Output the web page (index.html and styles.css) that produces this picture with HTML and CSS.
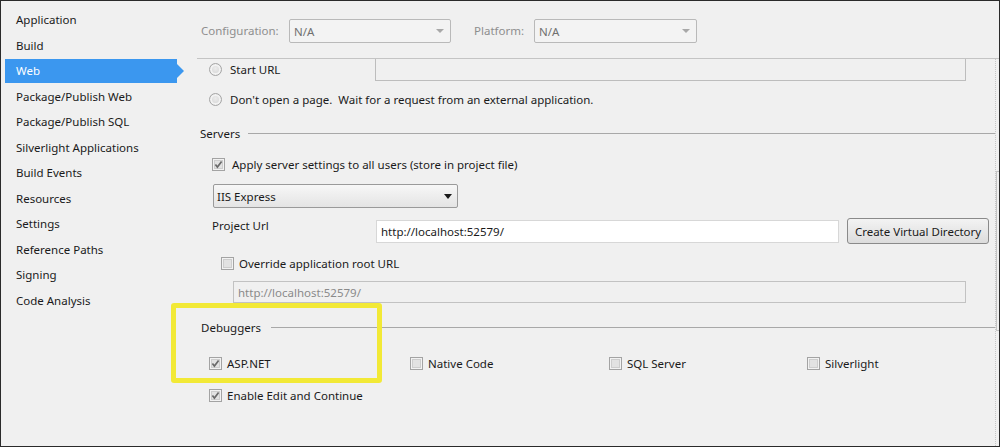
FILE: index.html
```html
<!DOCTYPE html>
<html>
<head>
<meta charset="utf-8">
<link rel="stylesheet" href="styles.css">
</head>
<body>
<div class="window">
  <nav class="nav">
    <div class="nav-item">Application</div>
    <div class="nav-item">Build</div>
    <div class="nav-item active">Web</div>
    <div class="nav-item">Package/Publish Web</div>
    <div class="nav-item">Package/Publish SQL</div>
    <div class="nav-item">Silverlight Applications</div>
    <div class="nav-item">Build Events</div>
    <div class="nav-item">Resources</div>
    <div class="nav-item">Settings</div>
    <div class="nav-item">Reference Paths</div>
    <div class="nav-item">Signing</div>
    <div class="nav-item">Code Analysis</div>
  </nav>
  <main class="main">
    <header class="toolbar">
      <span class="tlabel cfg">Configuration:</span>
      <div class="combo disabled cfg-combo"><span>N/A</span><span class="arrow light"></span></div>
      <span class="tlabel plat">Platform:</span>
      <div class="combo disabled plat-combo"><span>N/A</span><span class="arrow light"></span></div>
    </header>
    <div class="viewport">
      <div class="content">
        <div class="row start-row">
          <label class="opt radio-label"><span class="radio"></span>Start URL</label>
          <div class="textbox start-box"></div>
        </div>
        <div class="row radio-row">
          <label class="opt"><span class="radio"></span>Don't open a page.&nbsp; Wait for a request from an external application.</label>
        </div>

        <div class="group servers"><span>Servers</span><span class="rule"></span></div>
        <label class="opt apply"><svg class="cb" viewBox="0 0 13 13"><rect x="0.5" y="0.5" width="12" height="12" fill="#f2f2f2" stroke="#a3a3a3"/><rect x="2.5" y="2.5" width="8" height="8" fill="#e2e2e2" stroke="#cdcdcd"/><path d="M3.4 6.4 L5.4 9 L9.6 3.4" stroke="#6a6a6a" stroke-width="1.7" fill="none"/></svg>Apply server settings to all users (store in project file)</label>
        <div class="combo iis"><span>IIS Express</span><span class="arrow"></span></div>

        <div class="row url-row">
          <span class="url-label">Project Url</span>
          <div class="textbox url-box">http://localhost:52579/</div>
          <button class="btn">Create Virtual Directory</button>
        </div>
        <label class="opt override"><svg class="cb" viewBox="0 0 13 13"><rect x="0.5" y="0.5" width="12" height="12" fill="#f2f2f2" stroke="#a3a3a3"/><rect x="2.5" y="2.5" width="8" height="8" fill="#e2e2e2" stroke="#cdcdcd"/></svg>Override application root URL</label>
        <div class="textbox root-box">http://localhost:52579/</div>

        <div class="group debuggers"><span>Debuggers</span><span class="rule"></span></div>
        <div class="dbg-grid">
          <label class="opt"><svg class="cb" viewBox="0 0 13 13"><rect x="0.5" y="0.5" width="12" height="12" fill="#f2f2f2" stroke="#a3a3a3"/><rect x="2.5" y="2.5" width="8" height="8" fill="#e2e2e2" stroke="#cdcdcd"/><path d="M3.4 6.4 L5.4 9 L9.6 3.4" stroke="#6a6a6a" stroke-width="1.7" fill="none"/></svg>ASP.NET</label>
          <label class="opt"><svg class="cb" viewBox="0 0 13 13"><rect x="0.5" y="0.5" width="12" height="12" fill="#f2f2f2" stroke="#a3a3a3"/><rect x="2.5" y="2.5" width="8" height="8" fill="#e2e2e2" stroke="#cdcdcd"/></svg>Native Code</label>
          <label class="opt"><svg class="cb" viewBox="0 0 13 13"><rect x="0.5" y="0.5" width="12" height="12" fill="#f2f2f2" stroke="#a3a3a3"/><rect x="2.5" y="2.5" width="8" height="8" fill="#e2e2e2" stroke="#cdcdcd"/></svg>SQL Server</label>
          <label class="opt"><svg class="cb" viewBox="0 0 13 13"><rect x="0.5" y="0.5" width="12" height="12" fill="#f2f2f2" stroke="#a3a3a3"/><rect x="2.5" y="2.5" width="8" height="8" fill="#e2e2e2" stroke="#cdcdcd"/></svg>Silverlight</label>
        </div>
        <label class="opt enable"><svg class="cb" viewBox="0 0 13 13"><rect x="0.5" y="0.5" width="12" height="12" fill="#f2f2f2" stroke="#a3a3a3"/><rect x="2.5" y="2.5" width="8" height="8" fill="#e2e2e2" stroke="#cdcdcd"/><path d="M3.4 6.4 L5.4 9 L9.6 3.4" stroke="#6a6a6a" stroke-width="1.7" fill="none"/></svg>Enable Edit and Continue</label>
      </div>
      <div class="vscroll"><div class="thumb"></div></div>
    </div>
  </main>
  <div class="highlight"></div>
</div>
</body>
</html>
```

FILE: styles.css
```css
* { box-sizing: border-box; }
html, body { margin: 0; padding: 0; background: #f0f0f0; }
body {
  font-family: "Noto Sans", "Open Sans", sans-serif;
  font-size: 11.5px;
  color: #1a1a1a;
}
.window {
  position: relative;
  width: 1000px;
  height: 447px;
  border: 1px solid #2a2a2a;
  background: #f0f0f0;
  display: flex;
  overflow: hidden;
}
.nav {
  width: 196px;
  flex: none;
  padding: 6px 0 0 4px;
}
.nav-item {
  position: relative;
  height: 25.5px;
  line-height: 25.5px;
  width: 172px;
  padding-left: 11px;
  white-space: nowrap;
}
.nav-item.active {
  background: #3b97ef;
  color: #fff;
  height: 24px;
  line-height: 24px;
  margin: 1.25px 0 0.25px;
}
.nav-item.active::after {
  content: "";
  position: absolute;
  right: -7px;
  top: 5px;
  border-left: 7px solid #3b97ef;
  border-top: 7px solid transparent;
  border-bottom: 7px solid transparent;
}
.main {
  flex: 1;
  display: flex;
  flex-direction: column;
  min-width: 0;
}
.toolbar {
  height: 58px;
  flex: none;
  border-bottom: 1px solid #c4c4c4;
  display: flex;
  align-items: flex-start;
  padding: 18px 0 0 4px;
}
.tlabel { color: #8e8e8e; line-height: 24px; }
.cfg { width: 88px; }
.plat { width: 60px; margin-left: 23px; }
.combo {
  height: 24px;
  border: 1px solid #9a9a9a;
  border-radius: 2px;
  display: flex;
  align-items: center;
  justify-content: space-between;
  padding: 0 6px 0 4px;
  background: linear-gradient(#f7f7f7, #e4e4e4);
}
.combo.disabled {
  border-color: #b9b9b9;
  background: #f3f3f3;
  color: #707070;
}
.cfg-combo { width: 162px; }
.plat-combo { width: 163px; }
.arrow {
  width: 0; height: 0;
  border-left: 4px solid transparent;
  border-right: 4px solid transparent;
  border-top: 5px solid #1a1a1a;
}
.arrow.light { border-top-color: #a8a8a8; border-top-width: 4px; }
.viewport {
  flex: 1;
  display: flex;
  overflow: hidden;
}
.content {
  flex: 1;
  padding-left: 3px;
  min-width: 0;
}
.vscroll {
  width: 4px;
  flex: none;
  border-left: 1px dotted #c6c6c6;
  padding-top: 112px;
}
.thumb {
  height: 160px;
  border: 1px solid #c4c4c4;
  border-right: none;
}
.row { display: flex; }
.opt {
  display: flex;
  align-items: center;
  white-space: nowrap;
  height: 16px;
}
.radio {
  width: 13px; height: 13px;
  border-radius: 50%;
  border: 1px solid #a5a5a5;
  background: radial-gradient(circle at 50% 40%, #ececec 0, #d6d6d6 70%);
  box-shadow: inset 0 0 0 2px #f2f2f2;
  margin-right: 8px;
  flex: none;
}
.cb { width: 13px; height: 13px; flex: none; margin-right: 6px; }
.start-row { margin-top: -2px; height: 24px; align-items: center; }
.radio-label { width: 175px; padding-left: 9px; }
.textbox {
  height: 23px;
  border: 1px solid #c9c9c9;
  background: #fff;
  padding-left: 4px;
  display: flex;
  align-items: center;
}
.start-box {
  flex: 1;
  margin-right: 29px;
  background: #f0f0f0;
  border-color: #bdbdbd;
  border-top: none;
}
.radio-row { margin-top: 6px; height: 24px; align-items: center; padding-left: 9px; }
.group {
  display: flex;
  align-items: center;
  height: 16px;
}
.group .rule { flex: 1; border-top: 1px solid #a8a8a8; }
.servers { margin-top: 14px; }
.servers span:first-child { margin-right: 8px; }
.debuggers { margin-top: 16px; padding-left: 1px; }
.debuggers span:first-child { margin-right: 10px; }
.apply { margin-top: 15px; padding-left: 12px; }
.apply .cb { margin-right: 7px; }
.iis {
  margin-top: 12px;
  margin-left: 13px;
  width: 245px;
  padding-left: 3px;
  padding-right: 5px;
}
.url-row { margin-top: 10px; height: 26px; align-items: flex-start; }
.url-label { width: 176px; padding-left: 12px; line-height: 16px; }
.url-box { width: 463px; margin-top: 2px; border-color: #d7d7d7; }
.btn {
  margin-left: 8px;
  width: 142px;
  height: 26px;
  font: inherit;
  color: #1a1a1a;
  border: 1px solid #8a8a8a;
  border-radius: 3px;
  background: linear-gradient(#f3f3f3, #dcdcdc);
  padding: 0;
}
.override { margin-top: 11px; padding-left: 21px; }
.override .cb { margin-right: 5px; }
.root-box {
  margin-top: 10px;
  margin-left: 33px;
  margin-right: 29px;
  height: 22px;
  background: #f0f0f0;
  color: #8a8a8a;
  border-color: #c2c2c2;
}
.dbg-grid {
  margin-top: 20px;
  padding-left: 9px;
  display: grid;
  grid-template-columns: 201px 199px 198px auto;
}
.dbg-grid .cb { margin-right: 5px; }
.enable { margin-top: 16px; padding-left: 9px; }
.enable .cb { margin-right: 5px; }
.highlight {
  position: absolute;
  left: 170px;
  top: 302px;
  width: 211px;
  height: 80px;
  border: 5px solid #f2e936;
  border-radius: 3px;
  pointer-events: none;
}
```
